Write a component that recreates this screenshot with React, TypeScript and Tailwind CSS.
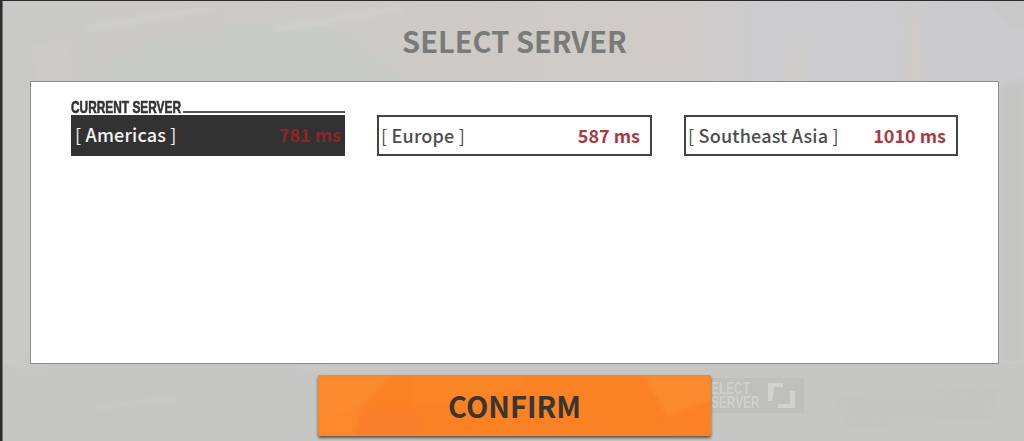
const FONT = "font-['Noto_Sans_CJK_KR','Noto_Sans',sans-serif]";

function Backdrop() {
  return (
    <svg className="absolute inset-0" width="1024" height="441" viewBox="0 0 1024 441" preserveAspectRatio="none">
      <defs>
        <linearGradient id="sky" x1="0" y1="0" x2="1" y2="0">
          <stop offset="0" stopColor="#c9c9c6" />
          <stop offset="0.3" stopColor="#cdcbc7" />
          <stop offset="0.62" stopColor="#cfcbc7" />
          <stop offset="0.74" stopColor="#cccbcd" />
          <stop offset="1" stopColor="#cbcacc" />
        </linearGradient>
        <filter id="soft">
          <feGaussianBlur stdDeviation="2.5" />
        </filter>
      </defs>
      <rect width="1024" height="441" fill="url(#sky)" />
      <rect y="364" width="1024" height="77" fill="#c6c6c5" />
      <g filter="url(#soft)">
        <polygon points="80,82 160,35 280,22 340,28 410,82" fill="#c8cbc8" />
        <polygon points="30,45 70,40 72,82 38,82" fill="#cdcbc6" />
        <polygon points="85,26 210,6 212,10 90,31" fill="#cfcfcb" />
        <polygon points="270,28 400,6 405,9 280,32" fill="#d1d0cc" />
        <polygon points="905,82 908,15 918,15 925,82" fill="#cecbc9" />
        <polygon points="785,82 790,42 803,40 808,82" fill="#cecccb" />
        <polygon points="990,0 1024,0 1024,32 1005,24" fill="#c7c8c8" />
        <polygon points="1000,85 1024,80 1024,364 1000,364" fill="#c6c6c5" />
        <polygon points="3,0 30,0 30,364 3,364" fill="#c9c9c7" />
        <polygon points="96,405 178,397 178,401 97,409" fill="#cbcac7" />
        <polygon points="15,358 48,358 46,374 18,374" fill="#c9c8c4" />
        <polygon points="300,366 325,366 325,372 300,372" fill="#cac9c6" />
        <polygon points="830,395 1000,388 990,420 850,428" fill="#c4c4c1" />
      </g>
      <rect width="1024" height="1" fill="#2c2c2e" />
      <rect width="2" height="441" fill="#2d2d2f" />
      <rect x="2" y="1" width="1" height="440" fill="#77777a" />
    </svg>
  );
}

function ServerCard({
  name,
  ping,
  current,
  className,
}: {
  name: string;
  ping: string;
  current?: boolean;
  className: string;
}) {
  return (
    <div className={`relative shrink-0 ${className}`}>
      {current && (
        <div className="absolute left-0 top-[-15px] flex w-full items-end">
          <span className="w-[109px] shrink-0 origin-left scale-x-[0.72] whitespace-nowrap font-['Liberation_Sans',sans-serif] text-[16.5px] leading-[14px] font-bold text-[#333333] [-webkit-text-stroke:0.6px_#333333]">
            CURRENT SERVER
          </span>
          <span className="mb-[1px] ml-[3px] h-[2px] flex-1 bg-[#555555]" />
        </div>
      )}
      <div
        className={`flex h-[41px] items-center justify-between text-[18px] ${
          current
            ? 'bg-[#333232] pb-[2px] pl-[4px] pr-[4px]'
            : 'border-2 border-[#444444] bg-white pb-[1px] pl-[2px] pr-[10px]'
        }`}
      >
        <span className={`font-medium tracking-[0.2px] ${current ? 'text-[#f3f3f3]' : 'text-[#4d4d4d]'}`}>
          <span className="font-normal">[ </span>
          {name}
          <span className="font-normal"> ]</span>
        </span>
        <span className={`font-bold ${current ? 'text-[#8f2626]' : 'text-[#ab3a3f]'}`}>{ping}</span>
      </div>
    </div>
  );
}

export default function App() {
  return (
    <div className={`relative flex h-[441px] w-[1024px] flex-col overflow-hidden ${FONT}`}>
      <Backdrop />

      <h1 className="relative flex h-[81px] items-center justify-center pl-[5px] text-[29px] font-bold text-[#797b79]">
        SELECT SERVER
      </h1>

      <div className="relative ml-[30px] h-[283px] w-[969px] border border-[#8c8c8c] bg-white pl-[40px] pt-[33px]">
        <div className="flex gap-[32px]">
          <ServerCard className="w-[274px]" name="Americas" ping="781 ms" current />
          <ServerCard className="w-[275px]" name="Europe" ping="587 ms" />
          <ServerCard className="w-[274px]" name="Southeast Asia" ping="1010 ms" />
        </div>
      </div>

      <div className="relative mt-[11px] ml-[318px] flex items-start">
        <button className="relative z-10 h-[61px] w-[393px] overflow-hidden rounded-[2px] bg-[#fb8125] shadow-[0_2px_3px_rgba(60,45,30,0.75)]">
          <svg className="absolute inset-0" width="393" height="61" viewBox="0 0 393 61">
            <defs>
              <filter id="facet">
                <feGaussianBlur stdDeviation="2" />
              </filter>
            </defs>
            <g filter="url(#facet)">
              <polygon points="0,0 75,0 45,30 0,45" fill="#fc8a2e" />
              <polygon points="45,30 95,32 105,61 35,61" fill="#fb7f2c" />
              <polygon points="0,45 45,30 35,61 0,61" fill="#fc882c" />
              <polygon points="95,0 210,0 200,12 130,30 95,32" fill="#fc8528" />
              <polygon points="325,0 393,0 393,25 350,42" fill="#fc8a2e" />
              <polygon points="350,42 393,25 393,61 335,61" fill="#fb8026" />
            </g>
          </svg>
          <span className="relative text-[29px] font-bold text-[#3a3530]">CONFIRM</span>
        </button>

        <div className="mt-[3px] flex h-[35px] w-[93px] items-center bg-[#bfbfbe]">
          <span className="w-[54px] shrink-0 origin-left scale-x-[0.72] whitespace-nowrap font-['Liberation_Sans',sans-serif] text-[16.5px] leading-[13.5px] font-bold text-[#d0d0ce]">
            ELECT
            <br />
            SERVER
          </span>
          <svg width="36" height="35" viewBox="0 0 36 35">
            <path d="M3 5 H18 V9 H9 L7.5 23 H3 Z" fill="#d3d2d0" />
            <path d="M30 13 V30 H13 V26 H25 V13 Z" fill="#d3d2d0" />
          </svg>
        </div>
      </div>
    </div>
  );
}
